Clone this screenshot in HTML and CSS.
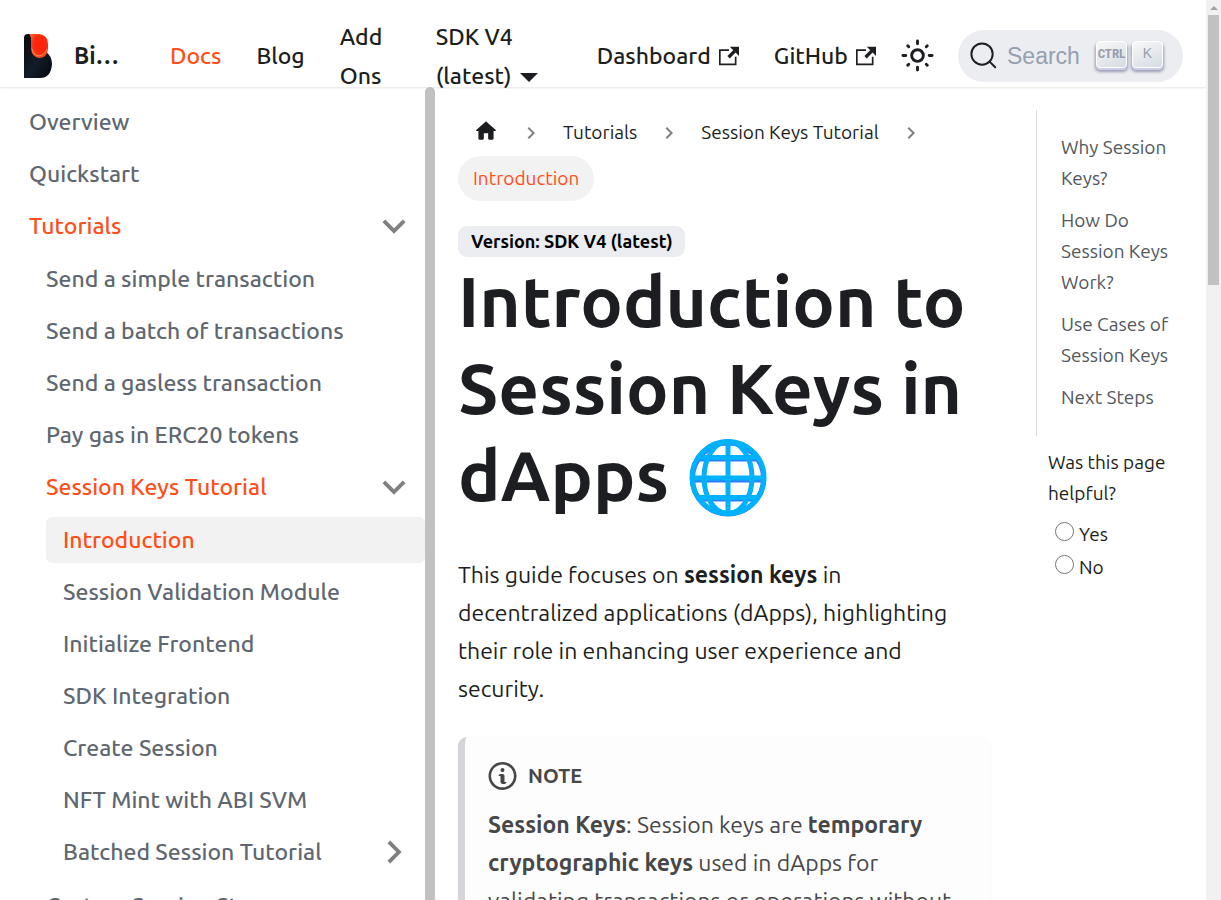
FILE: index.html
```html
<!DOCTYPE html>
<html lang="en">
<head>
<meta charset="utf-8">
<meta name="viewport" content="width=device-width, initial-scale=1">
<title>Introduction to Session Keys in dApps</title>
<link rel="stylesheet" href="styles.css">
</head>
<body>
<svg class="defs" aria-hidden="true">
  <symbol id="external" viewBox="0 0 24 24"><path fill="currentColor" d="M21 13v10h-21v-19h12v2h-10v15h17v-8h2zm3-12h-10.988l4.035 4-6.977 7.07 2.828 2.828 6.977-7.07 4.125 4.172v-11z"/></symbol>
  <symbol id="down" viewBox="0 0 24 24"><path fill="currentColor" d="M16.59 8.59L12 13.17 7.41 8.59 6 10l6 6 6-6z"/></symbol>
  <symbol id="right" viewBox="0 0 24 24"><path fill="currentColor" d="M10 6L8.59 7.41 13.17 12l-4.58 4.59L10 18l6-6z"/></symbol>
</svg>
<div class="app">
  <header class="navbar">
    <a class="brand" href="#">
      <svg class="logo" viewBox="0 0 28 44" aria-hidden="true">
        <defs>
          <linearGradient id="dark" x1="0" y1="0" x2="1" y2="1"><stop offset="0" stop-color="#07080d"/><stop offset=".55" stop-color="#131c28"/><stop offset="1" stop-color="#05070c"/></linearGradient>
          <radialGradient id="fire" cx=".6" cy=".45" r=".6"><stop offset="0" stop-color="#ff1e0a"/><stop offset=".6" stop-color="#fa2a0e"/><stop offset="1" stop-color="#ff5a2c"/></radialGradient>
        </defs>
        <path fill="url(#dark)" d="M0 4Q0 0 4 0H8L22 18Q28 22 28 30Q27 44 16 44H0z"/>
        <path fill="url(#fire)" d="M5 0H15Q24 1 24 10V15Q23 24 15 24Q8 23 7 15V6Q7 2 5 0z"/>
        <path fill="none" stroke="#ff8658" d="M8 15Q9 21 15 22Q21 21 23 15"/>
      </svg>
      <b class="brand-name">Bi…</b>
    </a>
    <nav class="links">
      <a class="active" href="#">Docs</a>
      <a href="#">Blog</a>
      <a class="addons" href="#">Add Ons</a>
      <a class="version" href="#">SDK V4 (latest)<span class="caret"></span></a>
      <a class="dashboard" href="#">Dashboard<svg class="ext"><use href="#external"/></svg></a>
      <a class="github" href="#">GitHub<svg class="ext"><use href="#external"/></svg></a>
    </nav>
    <button class="theme" aria-label="Switch colour mode">
      <svg viewBox="0 0 24 24" fill="none" stroke="currentColor" stroke-width="2" stroke-linecap="round"><circle cx="12" cy="12" r="4"/><path d="M12 2v2M12 20v2M2 12h2M20 12h2M5.3 5.3l.7.7M18 18l.7.7M5.3 18.7l.7-.7M18 6l.7-.7"/></svg>
    </button>
    <button class="search">
      <svg viewBox="0 0 20 20" fill="none" stroke="currentColor" stroke-width="1.4" stroke-linecap="round" aria-hidden="true"><circle cx="8.6" cy="8.6" r="7.6"/><path d="M14 14l4 4"/></svg>
      <span class="search-label">Search</span>
      <kbd class="ctrl">CTRL</kbd><kbd>K</kbd>
    </button>
  </header>

  <div class="body">
    <aside class="sidebar">
      <ul class="menu">
        <li><a href="#">Overview</a></li>
        <li><a href="#">Quickstart</a></li>
        <li><a class="open" href="#">Tutorials<svg><use href="#down"/></svg></a>
          <ul>
            <li><a href="#">Send a simple transaction</a></li>
            <li><a href="#">Send a batch of transactions</a></li>
            <li><a href="#">Send a gasless transaction</a></li>
            <li><a href="#">Pay gas in ERC20 tokens</a></li>
            <li><a class="open" href="#">Session Keys Tutorial<svg><use href="#down"/></svg></a>
              <ul>
                <li><a class="open current" href="#">Introduction</a></li>
                <li><a href="#">Session Validation Module</a></li>
                <li><a href="#">Initialize Frontend</a></li>
                <li><a href="#">SDK Integration</a></li>
                <li><a href="#">Create Session</a></li>
                <li><a href="#">NFT Mint with ABI SVM</a></li>
                <li><a href="#">Batched Session Tutorial<svg><use href="#right"/></svg></a></li>
              </ul>
            </li>
            <li><a href="#">Custom Session Storage</a></li>
          </ul>
        </li>
      </ul>
      <div class="side-thumb"></div>
    </aside>

    <main class="article">
      <nav class="crumbs" aria-label="Breadcrumbs">
        <a class="home" href="#" aria-label="Home"><svg viewBox="0 0 24 24"><path fill="currentColor" d="M10 19v-5h4v5c0 .55.45 1 1 1h3c.55 0 1-.45 1-1v-7h1.7c.46 0 .68-.57.33-.87L12.67 3.6c-.38-.34-.96-.34-1.34 0l-8.36 7.53c-.34.3-.13.87.33.87H5v7c0 .55.45 1 1 1h3c.55 0 1-.45 1-1z"/></svg></a>
        <svg class="sep"><use href="#right"/></svg>
        <a href="#">Tutorials</a>
        <svg class="sep"><use href="#right"/></svg>
        <a href="#">Session Keys Tutorial</a>
        <svg class="sep"><use href="#right"/></svg>
        <span class="here">Introduction</span>
      </nav>
      <span class="badge">Version: SDK V4 (latest)</span>
      <h1>Introduction to Session Keys in dApps <svg class="globe" viewBox="-2 0 84 78" role="img" aria-label="Globe" fill="none">
        <g stroke="#2f7df6" stroke-width="5"><circle cx="40" cy="39.500" r="35.5"/><path d="M10 20H70M4 41H76M10 60H70"/></g>
        <g stroke="#00b1ff" stroke-width="5"><circle cx="40" cy="38.5" r="36"/><ellipse cx="40" cy="38.5" rx="24" ry="36"/><path d="M40 2V75M10 18.500H70M4 39H76M10 58.500H70"/></g>
      </svg></h1>
      <p class="intro">This guide focuses on <strong>session keys</strong> in decentralized applications (dApps), highlighting their role in enhancing user experience and security.</p>
      <section class="note">
        <h2><svg viewBox="0 0 14 16" aria-hidden="true"><path fill="currentColor" fill-rule="evenodd" d="M6.3 5.69a.942.942 0 0 1-.28-.7c0-.28.09-.52.28-.7.19-.18.42-.28.7-.28.28 0 .52.09.7.28.18.19.28.42.28.7 0 .28-.09.52-.28.7a1 1 0 0 1-.7.3c-.28 0-.52-.11-.7-.3zM8 7.99c-.02-.25-.11-.48-.31-.69-.2-.19-.42-.3-.69-.31H6c-.27.02-.48.13-.69.31-.2.2-.3.44-.31.69h1v3c.02.27.11.5.31.69.2.2.42.31.69.31h1c.27 0 .48-.11.69-.31.2-.19.3-.42.31-.69H8V7.98v.01zM7 2.3c-3.14 0-5.7 2.54-5.7 5.68 0 3.14 2.56 5.7 5.7 5.7s5.7-2.55 5.7-5.7c0-3.15-2.56-5.69-5.7-5.69v.01zM7 .98c3.86 0 7 3.14 7 7s-3.14 7-7 7-7-3.12-7-7 3.12-7 7-7z"/></svg>NOTE</h2>
        <p><strong>Session Keys</strong>: Session keys are <strong>temporary cryptographic keys</strong> used in dApps for validating transactions or operations without</p>
      </section>
    </main>

    <aside class="aside">
      <ul class="toc">
        <li><a href="#">Why Session Keys?</a></li>
        <li><a href="#">How Do Session Keys Work?</a></li>
        <li><a href="#">Use Cases of Session Keys</a></li>
        <li><a href="#">Next Steps</a></li>
      </ul>
      <form class="feedback">
        <p>Was this page helpful?</p>
        <label><input type="radio" name="helpful">Yes</label>
        <label><input type="radio" name="helpful">No</label>
      </form>
    </aside>
  </div>
</div>
<div class="page-scroll" aria-hidden="true"><div class="arrow"></div><div class="page-thumb"></div></div>
</body>
</html>
```
FILE: styles.css
```css
* { box-sizing: border-box; }
body {
  margin: 0; height: 100vh; display: flex; overflow: hidden;
  background: #fff; color: #1c1e21;
  font: 23px/38px Ubuntu, "Noto Sans", sans-serif;
}
a { color: inherit; text-decoration: none; }
ul { list-style: none; margin: 0; padding: 0; }
button { border: 0; background: none; padding: 0; color: inherit; font: inherit; }
svg { flex: none; }
.defs { position: absolute; width: 0; height: 0; }

.app { flex: 1; min-width: 0; display: flex; flex-direction: column; }
.navbar {
  flex: none; height: 87px; padding: 24px 23px 0 24px;
  display: flex; align-items: center;
  line-height: 39px; font-weight: 500;
  box-shadow: 0 1px 2px rgba(0, 0, 0, .1);
}
.brand { display: flex; align-items: center; gap: 22px; width: 146px; }
.logo { width: 28px; height: 44px; }
.links { flex: 1; display: flex; align-items: center; gap: 35px; }
.active { color: #ff4e17; }
.addons { width: 61px; }
.version { width: 126px; }
.caret {
  display: inline-block; margin-left: 8px; vertical-align: 2px;
  border: 9px solid transparent; border-top-color: currentColor; border-bottom: 0;
}
.dashboard, .github { display: flex; align-items: center; gap: 8px; }
.ext { width: 20px; height: 20px; }
.theme { width: 35px; height: 35px; margin-right: 23px; }
.theme svg { display: block; }
.search {
  width: 225px; height: 52px; padding: 0 20px 0 12px; border-radius: 26px;
  background: #ebedf0; display: flex; align-items: center;
}
.search svg { width: 28px; height: 28px; }
.search-label {
  flex: 1; margin-left: 9px; text-align: left; color: #969faf;
  font: 23px/28px "Liberation Sans", sans-serif;
}
kbd {
  width: 31px; height: 27px; margin: 0 0 2px 5px; border: 1px solid #fff; border-radius: 4px;
  background: linear-gradient(-26deg, #d5dbe4, #f8f8f8); color: #969faf; text-align: center;
  box-shadow: 0 2px 0 #cdcde6, 0 3px 3px 1px rgba(30, 35, 90, .4);
  font: 14px/22px "Liberation Sans", sans-serif;
}
.ctrl { font: bold 13px/24px "Ubuntu Condensed", "Roboto Condensed", "Liberation Sans Narrow", sans-serif; }

.body { flex: 1; min-height: 0; display: flex; }
.sidebar { width: 435px; flex: none; display: flex; overflow: hidden; }
.menu { flex: 1; padding: 12px 0 0 12px; }
.menu li { margin-top: 6px; }
.menu > li:first-child { margin-top: 0; }
.menu ul { padding-left: 17px; margin-top: 7px; }
.menu ul ul { margin-bottom: 8px; }
.menu ul > li:first-child { margin-top: 0; }
.menu a {
  height: 46px; padding: 0 8px 0 17px; border-radius: 6px;
  display: flex; align-items: center; justify-content: space-between;
  color: #606770; font-weight: 500; white-space: nowrap;
}
.menu a.open { color: #ff4e17; }
.menu a.current { background: #f2f2f2; }
.menu svg { width: 46px; height: 46px; color: #808080; }
.side-thumb { width: 10px; border-radius: 5px 5px 0 0; background: #c1c1c1; }

.article { flex: 1; min-width: 0; padding: 23px 46px 0 23px; overflow: hidden; }
.crumbs {
  display: flex; flex-wrap: wrap; align-items: center; row-gap: 1px; margin-bottom: 25px;
  font-size: 19px; line-height: 30px;
}
.crumbs a, .here { height: 45px; padding: 7px 15px; }
.home svg { display: block; width: 26px; height: 28px; }
.sep { width: 24px; height: 24px; margin: 0 5px; color: #808080; }
.here { border-radius: 23px; background: #f2f2f2; color: #ff4e17; }
.badge {
  display: table; padding: 0 12px 0 13px; border-radius: 9px; background: #ebedf0;
  color: #000; font-size: 18px; line-height: 31px; font-weight: 700;
}
h1 { margin: 0 0 38px; font-size: 71px; line-height: 87px; font-weight: 700; }
.globe { width: 84px; height: 78px; vertical-align: -16px; }
.article p { margin: 0 0 29px; }
.article .intro { padding-right: 20px; }
.note {
  padding: 23px; border-left: 7px solid #d4d5d8; border-radius: 9px;
  background: #fdfdfe; color: #474748; box-shadow: 0 1px 2px rgba(0, 0, 0, .1);
}
.note h2 {
  margin: 0 0 14px; display: flex; align-items: center; gap: 11px;
  font-size: 20px; line-height: 32px;
}
.note svg { width: 29px; height: 32px; }

.aside { width: 170px; flex: none; padding: 23px 23px 0 0; font-size: 19px; line-height: 31px; }
.toc { border-left: 1px solid #dadde1; padding: 22px 0 23px 24px; color: #525860; display: grid; gap: 11px; }
.feedback { padding: 11px 0 0 12px; }
.feedback p { margin: 0 0 9px; }
.feedback label { display: flex; align-items: center; gap: 5px; height: 33px; padding-left: 7px; }
.feedback input { width: 19px; height: 19px; margin: 0 0 6px; }

.page-scroll { width: 15px; flex: none; background: #f1f1f1; }
.arrow {
  width: 8px; margin: 6px 4px 5px;
  border: 4px solid transparent; border-bottom-color: #a3a3a3; border-top: 0;
}
.page-thumb { height: 30vh; margin: 0 2px; background: #c1c1c1; }
```
